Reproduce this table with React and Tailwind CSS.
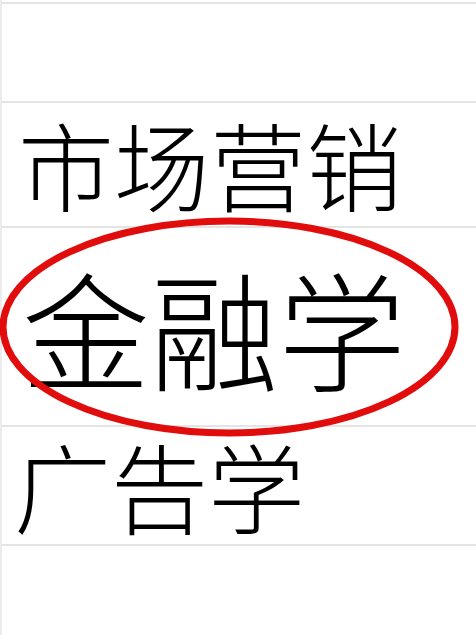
export default function App() {
  const font = { fontFamily: '"Noto Sans CJK SC", "Noto Sans", sans-serif' }

  return (
    <div className="relative w-[476px] h-[635px] overflow-hidden bg-white" style={font}>
      <div className="flex flex-col h-full pt-[2px] border-l-2 border-[#ececec]">
        <div className="h-[99px] border-t-2 border-[#e4e4e4]" />
        <div className="h-[125px] border-t-2 border-[#e4e4e4] pl-[16px] pt-[12px]">
          <span className="block text-[96px] leading-none font-light text-black">市场营销</span>
        </div>
        <div className="h-[199px] border-t-2 border-[#e4e4e4] pl-[20px] pt-[35px]">
          <span className="block text-[128px] leading-none font-light text-black">金融学</span>
        </div>
        <div className="h-[119px] border-t-2 border-[#e4e4e4] pl-[12px] pt-[8px]">
          <span className="block text-[97px] leading-none font-light text-black">广告学</span>
        </div>
        <div className="flex-1 border-t-2 border-[#e4e4e4]" />
      </div>

      {/* red circle marking */}
      <svg className="absolute left-0 top-0 pointer-events-none" width="476" height="635" viewBox="0 0 476 635">
        <ellipse cx="229" cy="327" rx="226" ry="106" fill="none" stroke="#e10d0d" strokeWidth="7" />
      </svg>
    </div>
  )
}
